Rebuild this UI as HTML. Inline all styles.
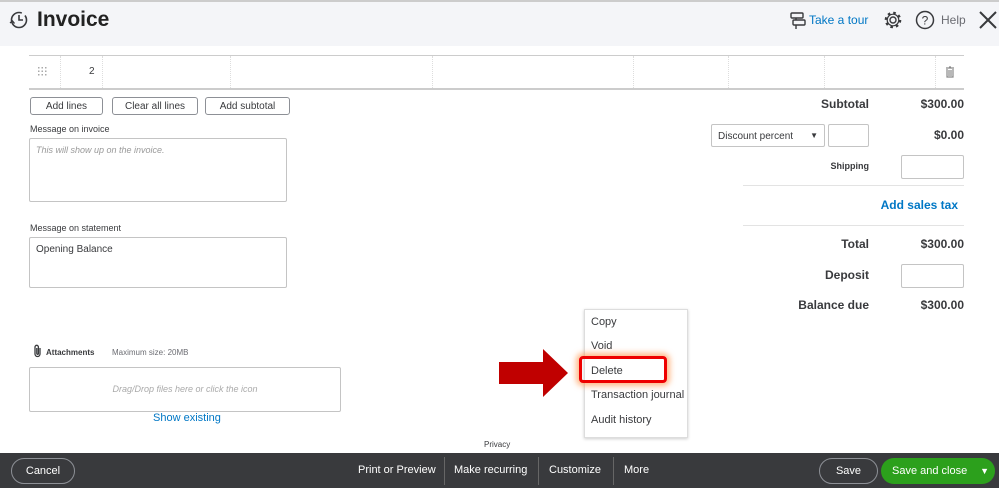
<!DOCTYPE html>
<html><head><style>
*{margin:0;padding:0;box-sizing:border-box}
body{width:999px;height:491px;overflow:hidden;background:#fff;font-family:"Liberation Sans",sans-serif;color:#393a3d;position:relative}
.a{position:absolute}
.hdr{left:0;top:0;width:999px;height:46px;background:#f4f5f8;border-top:2px solid #ccc}
.btn{position:absolute;height:18px;border:1px solid #8d9096;border-radius:3px;font-size:10px;text-align:center;line-height:16px;background:#fff;color:#393a3d;padding-top:1px}
.lbl{font-size:9px;position:absolute}
.box{position:absolute;border:1px solid #c4c4c4;border-radius:2px}
.vl{position:absolute;top:56px;height:32px;border-left:1px dotted #ddd}
.r{position:absolute;font-size:12px;font-weight:bold;text-align:right}
.mi{position:absolute;left:591px;font-size:11px;color:#393a3d}
.bb{font-size:11px;color:#fff;position:absolute;top:464px}
</style></head><body>
<div class="a hdr"></div>
<svg class="a" style="left:9px;top:10px" width="20" height="20" viewBox="0 0 20 20"><circle cx="10" cy="10" r="7.5" fill="none" stroke="#393a3d" stroke-width="1.6" stroke-dasharray="38 4"/><path d="M10 5v5h4" fill="none" stroke="#393a3d" stroke-width="1.6"/><path d="M1 13l2.5-2 2 2.5" fill="none" stroke="#393a3d" stroke-width="1.4"/></svg>
<div class="a" style="left:37px;top:8px;font-size:21px;font-weight:bold;color:#222">Invoice</div>
<svg class="a" style="left:789px;top:11px" width="18" height="18" viewBox="0 0 18 18" fill="none" stroke="#393a3d" stroke-width="1.4"><rect x="2" y="2" width="12" height="5" rx="1"/><rect x="4" y="9" width="12" height="5" rx="1"/><path d="M7 14v4M7 7v2"/></svg>
<div class="a" style="left:809px;top:13px;font-size:12px;color:#0077c5">Take a tour</div>
<svg class="a" style="left:883px;top:10px" width="20" height="20" viewBox="0 0 20 20"><circle cx="10" cy="10" r="3" fill="none" stroke="#393a3d" stroke-width="1.4"/><circle cx="10" cy="10" r="7" fill="none" stroke="#393a3d" stroke-width="2.6" stroke-dasharray="2.5 3"/><circle cx="10" cy="10" r="5.8" fill="none" stroke="#393a3d" stroke-width="1.2"/></svg>
<svg class="a" style="left:915px;top:10px" width="20" height="20" viewBox="0 0 20 20"><circle cx="10" cy="10" r="8.5" fill="none" stroke="#393a3d" stroke-width="1.5"/><text x="10" y="14.5" font-size="12" text-anchor="middle" fill="#393a3d" font-family="Liberation Sans">?</text></svg>
<div class="a" style="left:941px;top:13px;font-size:12px;color:#6b6c72">Help</div>
<svg class="a" style="left:978px;top:10px" width="20" height="20" viewBox="0 0 20 20"><path d="M2 2l16 16M18 2L2 18" stroke="#393a3d" stroke-width="2"/></svg>
<div class="a" style="left:29px;top:55px;width:935px;border-top:1px solid #ccc"></div>
<div class="a" style="left:29px;top:88px;width:935px;border-top:2px solid #ccc"></div>
<div class="vl" style="left:60px"></div><div class="vl" style="left:102px"></div><div class="vl" style="left:230px"></div><div class="vl" style="left:432px"></div><div class="vl" style="left:633px"></div><div class="vl" style="left:728px"></div><div class="vl" style="left:824px"></div><div class="vl" style="left:935px"></div>
<svg class="a" style="left:38px;top:67px" width="9" height="9" viewBox="0 0 9 9" fill="#aaa"><rect x="0" y="0" width="1.5" height="1.5"/><rect x="3.5" y="0" width="1.5" height="1.5"/><rect x="7" y="0" width="1.5" height="1.5"/><rect x="0" y="3.5" width="1.5" height="1.5"/><rect x="3.5" y="3.5" width="1.5" height="1.5"/><rect x="7" y="3.5" width="1.5" height="1.5"/><rect x="0" y="7" width="1.5" height="1.5"/><rect x="3.5" y="7" width="1.5" height="1.5"/><rect x="7" y="7" width="1.5" height="1.5"/></svg>
<div class="a" style="left:89px;top:66px;font-size:10px">2</div>
<svg class="a" style="left:945px;top:66px" width="10" height="12" viewBox="0 0 10 12" fill="none" stroke="#888" stroke-width="1.2"><path d="M1 2h8M4 1h2M2 3v8h6V3M4 4v6M6 4v6"/></svg>
<div class="btn" style="left:30px;top:97px;width:73px">Add lines</div>
<div class="btn" style="left:112px;top:97px;width:86px">Clear all lines</div>
<div class="btn" style="left:205px;top:97px;width:85px">Add subtotal</div>
<div class="lbl" style="left:30px;top:124px">Message on invoice</div>
<div class="box" style="left:29px;top:138px;width:258px;height:64px"><div style="font-size:9px;font-style:italic;color:#999;padding:6px">This will show up on the invoice.</div></div>
<div class="lbl" style="left:30px;top:223px">Message on statement</div>
<div class="box" style="left:29px;top:237px;width:258px;height:51px"><div style="font-size:10px;padding:6px">Opening Balance</div></div>
<div class="r" style="left:760px;width:109px;top:97px">Subtotal</div>
<div class="r" style="left:880px;width:84px;top:97px">$300.00</div>
<div class="box" style="left:711px;top:124px;width:114px;height:23px;font-size:10px;padding:6px 6px">Discount percent<span style="float:right;font-size:8px">▼</span></div>
<div class="box" style="left:828px;top:124px;width:41px;height:23px"></div>
<div class="r" style="left:880px;width:84px;top:128px">$0.00</div>
<div class="a" style="left:800px;width:69px;top:161px;font-size:9px;font-weight:bold;text-align:right">Shipping</div>
<div class="box" style="left:901px;top:155px;width:63px;height:24px"></div>
<div class="a" style="left:743px;top:185px;width:221px;border-top:1px solid #e3e3e3"></div>
<div class="a" style="left:860px;width:98px;top:198px;font-size:12px;font-weight:bold;color:#0077c5;text-align:right">Add sales tax</div>
<div class="a" style="left:743px;top:225px;width:221px;border-top:1px solid #e3e3e3"></div>
<div class="r" style="left:760px;width:109px;top:237px">Total</div>
<div class="r" style="left:880px;width:84px;top:237px">$300.00</div>
<div class="r" style="left:760px;width:109px;top:268px">Deposit</div>
<div class="box" style="left:901px;top:264px;width:63px;height:24px"></div>
<div class="r" style="left:760px;width:109px;top:298px">Balance due</div>
<div class="r" style="left:880px;width:84px;top:298px">$300.00</div>
<svg class="a" style="left:33px;top:344px" width="10" height="14" viewBox="0 0 10 14" fill="none" stroke="#393a3d" stroke-width="1.3"><path d="M7 4v6a2.5 2.5 0 0 1-5 0V3a1.7 1.7 0 0 1 3.4 0v6.5a.8.8 0 0 1-1.6 0V4"/></svg>
<div class="a" style="left:46px;top:348px;font-size:8px;font-weight:bold">Attachments</div>
<div class="a" style="left:112px;top:348px;font-size:8px;color:#6b6c72">Maximum size: 20MB</div>
<div class="box" style="left:29px;top:367px;width:312px;height:45px;text-align:center;font-size:9px;font-style:italic;color:#aaa;line-height:43px">Drag/Drop files here or click the icon</div>
<div class="a" style="left:153px;top:412px;font-size:11px;color:#0077c5">Show existing</div>
<div class="a" style="left:484px;top:440px;font-size:8px">Privacy</div>
<div class="a" style="left:584px;top:309px;width:104px;height:129px;border:1px solid #ddd;background:#fff;box-shadow:0 1px 3px rgba(0,0,0,.2)"></div>
<div class="mi" style="top:316px">Copy</div>
<div class="mi" style="top:340px">Void</div>
<div class="a" style="left:579px;top:356px;width:88px;height:27px;border:3px solid #e00;border-radius:4px;box-shadow:0 0 6px 3px rgba(255,140,60,.6)"></div>
<div class="mi" style="top:365px">Delete</div>
<div class="mi" style="top:389px">Transaction journal</div>
<div class="mi" style="top:414px">Audit history</div>
<svg class="a" style="left:499px;top:349px" width="70" height="48" viewBox="0 0 70 48"><path d="M0 13h44V0l25 24-25 24V35H0z" fill="#c00000"/></svg>
<div class="a" style="left:0;top:453px;width:999px;height:35px;background:#393a3d"></div>
<div class="a" style="left:11px;top:458px;width:64px;height:26px;border:1px solid #8d9096;border-radius:13px;color:#fff;font-size:11px;text-align:center;line-height:24px">Cancel</div>
<div class="bb" style="left:358px">Print or Preview</div>
<div class="a" style="left:444px;top:457px;height:28px;border-left:1px solid #666"></div>
<div class="bb" style="left:454px">Make recurring</div>
<div class="a" style="left:538px;top:457px;height:28px;border-left:1px solid #666"></div>
<div class="bb" style="left:549px">Customize</div>
<div class="a" style="left:613px;top:457px;height:28px;border-left:1px solid #666"></div>
<div class="bb" style="left:624px">More</div>
<div class="a" style="left:819px;top:458px;width:59px;height:26px;border:1px solid #8d9096;border-radius:13px;color:#fff;font-size:11px;text-align:center;line-height:24px">Save</div>
<div class="a" style="left:881px;top:458px;width:114px;height:26px;background:#2ca01c;border-radius:13px;color:#fff;font-size:11px;line-height:26px;padding-left:11px">Save and close<span style="position:absolute;right:6px;font-size:9px">▼</span></div>
</body></html>
